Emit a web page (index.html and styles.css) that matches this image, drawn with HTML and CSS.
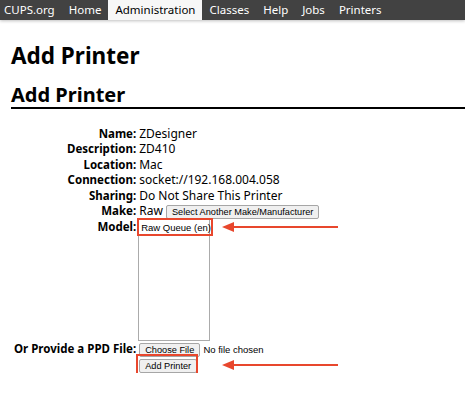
FILE: index.html
```html
<!DOCTYPE html>
<html lang="en">
<head>
    <meta charset="UTF-8">
    <title>Add Printer - CUPS</title>
    <link rel="stylesheet" href="styles.css">
</head>
<body>
    <ul class="nav">
        <li><a href="#">CUPS.org</a></li>
        <li><a href="#">Home</a></li>
        <li class="active"><a href="#">Administration</a></li>
        <li><a href="#">Classes</a></li>
        <li><a href="#">Help</a></li>
        <li><a href="#">Jobs</a></li>
        <li><a href="#">Printers</a></li>
    </ul>

    <div class="body">
        <h1>Add Printer</h1>
        <h2 class="title">Add Printer</h2>

        <form class="printer-form">
            <table>
                <tr><th>Name:</th><td>ZDesigner</td></tr>
                <tr><th>Description:</th><td>ZD410</td></tr>
                <tr><th>Location:</th><td>Mac</td></tr>
                <tr><th>Connection:</th><td>socket://192.168.004.058</td></tr>
                <tr><th>Sharing:</th><td>Do Not Share This Printer</td></tr>
                <tr>
                    <th>Make:</th>
                    <td>Raw <button type="button" class="btn">Select Another Make/Manufacturer</button></td>
                </tr>
                <tr>
                    <th class="top">Model:</th>
                    <td>
                        <div class="marked">
                            <div class="listbox">
                                <div class="option">Raw Queue (en)</div>
                            </div>
                            <span class="mark mark-option"></span>
                            <svg class="arrow arrow-model" width="116" height="12" viewBox="0 0 116 12">
                                <line x1="8" y1="6" x2="116" y2="6" stroke="#e8472d" stroke-width="2"/>
                                <path d="M0 6 L12 1 L12 11 Z" fill="#e8472d"/>
                            </svg>
                        </div>
                    </td>
                </tr>
                <tr>
                    <th>Or Provide a PPD File:</th>
                    <td><button type="button" class="btn">Choose File</button> <span class="file-name">No file chosen</span></td>
                </tr>
                <tr>
                    <th></th>
                    <td>
                        <div class="marked">
                            <button type="button" class="btn">Add Printer</button>
                            <span class="mark mark-submit"></span>
                            <svg class="arrow arrow-submit" width="116" height="12" viewBox="0 0 116 12">
                                <line x1="8" y1="6" x2="116" y2="6" stroke="#e8472d" stroke-width="2"/>
                                <path d="M0 6 L12 1 L12 11 Z" fill="#e8472d"/>
                            </svg>
                        </div>
                    </td>
                </tr>
            </table>
        </form>
    </div>
</body>
</html>
```

FILE: styles.css
```css
body {
    font-family: "Noto Sans", sans-serif;
    font-size: 12px;
    color: #000;
    margin: 0;
    background: #fff;
}
.nav {
    list-style: none;
    margin: 0;
    padding: 0;
    height: 20px;
    background: #424242;
    display: flex;
    box-shadow: 0 1px 3px rgba(0, 0, 0, 0.25);
}
.nav li a {
    display: block;
    padding: 0 7px;
    line-height: 20px;
    color: #fff;
    text-decoration: none;
    font-size: 11.5px;
}
.nav li:first-child a {
    padding-left: 4px;
}
.nav li.active {
    background: #f7f7f7;
}
.nav li.active a {
    color: #000;
}
.body {
    padding: 0 0 0 11px;
}
h1 {
    font-size: 22.5px;
    line-height: 28px;
    margin: 22px 0 0 0;
}
.title {
    font-size: 20px;
    margin: 13px 0 0 0;
    border-bottom: 2px solid #000;
    line-height: 24px;
}
.printer-form {
    margin-top: 17px;
}
.printer-form table {
    border-collapse: collapse;
}
.printer-form th {
    text-align: right;
    font-size: 11.5px;
    font-weight: bold;
    padding: 0 2px 0 3px;
    line-height: 15.4px;
    white-space: nowrap;
}
.printer-form th.top {
    vertical-align: top;
}
.printer-form td {
    padding: 0 0 0 1px;
    line-height: 15.4px;
    white-space: nowrap;
}
.btn {
    font-family: "Liberation Sans", Arial, sans-serif;
    font-size: 9.2px;
    line-height: 12px;
    padding: 0 5px;
    height: 14px;
    color: #000;
    background: #f0f0f0;
    border: 1px solid #a6a6a6;
    border-radius: 2px;
    vertical-align: middle;
}
.file-name {
    font-family: "Liberation Sans", Arial, sans-serif;
    font-size: 9.5px;
}
.marked {
    position: relative;
    display: inline-block;
    vertical-align: top;
}
.listbox {
    margin-left: -1px;
    width: 70px;
    height: 120px;
    border: 1px solid #ababab;
    font-family: "Liberation Sans", Arial, sans-serif;
    font-size: 9.5px;
}
.option {
    padding: 0 2px;
    line-height: 15px;
}
.mark {
    position: absolute;
    border: 2px solid #e8472d;
}
.mark-option {
    left: -2px;
    top: -1px;
    width: 72px;
    height: 14px;
}
.mark-submit {
    left: -3px;
    top: -3px;
    width: 58px;
    height: 17px;
}
.arrow {
    position: absolute;
    left: 83px;
}
.arrow-model {
    top: 2px;
}
.arrow-submit {
    top: 2px;
}
```
